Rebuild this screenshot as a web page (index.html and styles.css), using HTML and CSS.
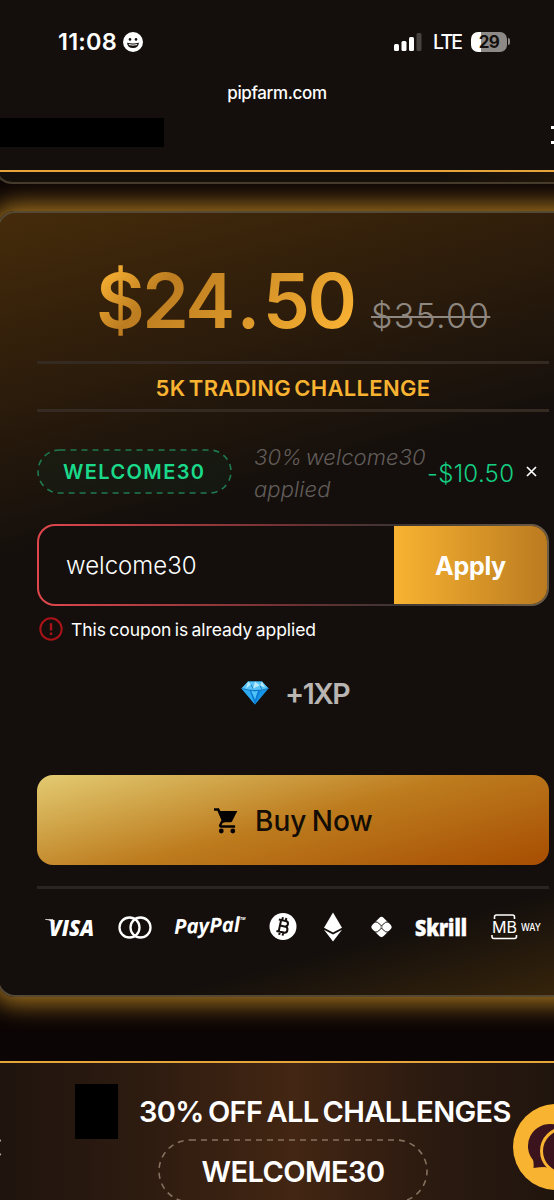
FILE: index.html
```html
<!DOCTYPE html>
<html lang="en">
<head>
<meta charset="utf-8">
<meta name="viewport" content="width=device-width, initial-scale=1">
<title>PipFarm – Checkout</title>
<link rel="stylesheet" href="styles.css">
</head>
<body>
<div class="screen">
  <header class="top">
    <div class="status">
      <span class="clock">11:08</span>
      <svg class="smiley" width="20" height="20" viewBox="0 0 20 20"><circle cx="10" cy="10" r="10" fill="#fff"/><circle cx="7" cy="7.400" r="1.300" fill="#140f0c"/><circle cx="13" cy="7.400" r="1.300" fill="#140f0c"/><path d="M4 10.800q6 1.600 12 0q-.6 5.200-6 5.200t-6-5.200z" fill="#140f0c"/><path d="M5.800 12.600q4.200 1 8.400 0" stroke="#fff" stroke-width="1" fill="none"/></svg>
      <svg class="signal" width="28" height="20" viewBox="0 0 28 20"><rect x="0" y="12" width="5" height="7" rx="1.500" fill="#fff"/><rect x="7.500" y="9" width="5" height="10" rx="1.500" fill="#fff"/><rect x="15" y="5" width="5" height="14" rx="1.500" fill="#fff"/><rect x="22.500" y="1" width="5" height="18" rx="1.500" fill="#464240"/></svg>
      <span class="net">LTE</span>
      <span class="battery">29</span><span class="nub"></span>
    </div>
    <div class="url">pipfarm.com</div>
    <div class="navbar"><div class="logo"></div><div class="burger"></div></div>
  </header>

  <main class="page">
    <div class="prev-card"></div>
    <section class="card">
      <div class="prices"><span class="price">$24<span class="point">.</span>50</span><span class="old">$35.00</span></div>
      <div class="plan">5K TRADING CHALLENGE</div>
      <div class="coupon">
        <span class="chip"><svg width="195" height="45"><rect x="1" y="1" width="193" height="43" rx="21.500"/></svg><b>WELCOME30</b></span>
        <span class="desc">30% welcome30<br>applied</span>
        <span class="minus">-$10.50</span>
        <svg class="close" width="11" height="11" viewBox="0 0 11 11"><path d="M1 1l9 9M10 1l-9 9" stroke="#fff" stroke-width="1.700"/></svg>
      </div>
      <div class="field"><div class="field-in"><span class="value">welcome30</span><span class="apply">Apply</span></div></div>
      <div class="error">
        <svg width="24" height="24" viewBox="0 0 24 24" fill="none" stroke="#a81318"><circle cx="12" cy="12" r="10.700" stroke-width="2"/><path d="M12 6.300v7.200M12 15.600v2.400" stroke-width="2.400"/></svg>
        <span>This coupon is already applied</span>
      </div>
      <div class="xp">
        <svg width="28" height="24" viewBox="0 0 28 24"><path d="M7 .5h14l6.500 7L14 23.500.5 7.500z" fill="#1695e6"/><path d="M7 .5h14l6.500 7q-13.500 4-27 0z" fill="#55c3f5"/><path d="M7 .5l3 3-5 4zM14 .5l5 4-7 3zM21 .5l3 6-5-2z" fill="#b6e9fc"/><path d="M.5 7.500l8 1.500L14 23.500z" fill="#2eaaf0"/><path d="M8.500 9h11L14 23.500z" fill="#0c7bd5"/><path d="M10 9.500l4 1 3-1-3 9z" fill="#4fc2f7"/><path d="M.5 7.500q13.500 4 27 0M10 3.500l2 4M19 4.500l2 4" stroke="#116fc0" stroke-width=".8" fill="none"/></svg>
        <span>+1XP</span>
      </div>
      <div class="buy">
        <svg width="25" height="26" viewBox="0 0 25 26"><path d="M1 1.500h4.200L11 14.600" fill="none" stroke="#050302" stroke-width="2.500"/><path d="M5 3h19.300l-5.200 10.300q-.5.900-1.500.9H9.500z" fill="#050302"/><path d="M9.300 13l-2.200 4.400q-.3 1.100 1 1.100h14" fill="none" stroke="#050302" stroke-width="2.300"/><circle cx="8.300" cy="23" r="2.400" fill="#050302"/><circle cx="19.800" cy="23" r="2.400" fill="#050302"/></svg>
        <span>Buy Now</span>
      </div>
      <div class="pay">
        <svg width="52" height="30"><text class="visa" x="5" y="23.500" font-size="22" textLength="45" lengthAdjust="spacingAndGlyphs">VISA</text><path d="M1 7.200h8l2 6Q9 8.500 1 7.800z" fill="#fff"/></svg>
        <svg width="34" height="30" fill="none" stroke="#fff" stroke-width="2.300"><circle cx="11.500" cy="15.500" r="10"/><circle cx="22.500" cy="15.500" r="10"/></svg>
        <svg width="74" height="30"><text x="1" y="21" font-size="20.500" textLength="66" lengthAdjust="spacingAndGlyphs" transform="rotate(-2 30 15)">PayPal</text><text x="67" y="8" font-size="4" font-weight="400">TM</text></svg>
        <svg width="28" height="30" viewBox="0 0 28 30"><circle cx="14" cy="14.500" r="13.500" fill="#fff"/><g transform="rotate(12 14 14.500)" fill="none" stroke="#140f0c" stroke-width="2"><path d="M8.500 8.500h7a2.800 2.800 0 0 1 0 5.700h-4.500M10.800 8.500v12M8.500 20.300h7.500a3 3 0 0 0 0-6.100h-5M12 5.500v3M15.500 5.500v3M12 20.500v3M15.500 20.500v3"/></g></svg>
        <svg width="30" height="30" viewBox="0 0 30 30" fill="#fff"><path d="M15 .5l9 15.300-9 4.700-9-4.700z"/><path d="M6 17.800l9 4.700 9-4.700-9 11.700z"/></svg>
        <svg width="23" height="30" viewBox="0 0 23 30"><rect x="3.500" y="7" width="16" height="16" rx="3.200" transform="rotate(45 11.500 15)" fill="#fff"/><path d="M3 10h3q1.500 0 2.500 1l3 3 3-3q1-1 2.500-1h3M3 20h3q1.500 0 2.500-1l3-3 3 3q1 1 2.500 1h3M11 14.500l1 1M12 14.500l-1 1" fill="none" stroke="#140f0c" stroke-width="1"/></svg>
        <svg width="55" height="30"><text class="skrill" x="1" y="23.500" font-size="22" textLength="52" lengthAdjust="spacingAndGlyphs">Skrill</text></svg>
        <svg width="53" height="30" fill="none" stroke="#fff" stroke-width="1.600"><path d="M3.500 7V5q0-2 2-2h16q2 0 2 2v2M1 23v1.500q0 2 2 2h20.500q2 0 2-2V23"/><text class="mb" x="1" y="20.500" font-size="16.500" textLength="25" lengthAdjust="spacingAndGlyphs">MB</text><text class="way" x="30" y="18.500" font-size="11" textLength="20" lengthAdjust="spacingAndGlyphs">WAY</text></svg>
      </div>
    </section>
  </main>

  <footer class="banner">
    <div class="headline"><span class="pic"></span><span>30% OFF ALL CHALLENGES</span></div>
    <div class="code"><svg width="270" height="64"><rect x="1" y="1" width="268" height="62" rx="31"/></svg><b>WELCOME30</b></div>
    <svg class="dots" width="4" height="24" fill="none" stroke="#bbb" stroke-width="1.500"><path d="M-3 5q3-1 3.500 1.500M-3 20q3 1 3.500-1.500"/></svg>
    <svg class="chat" width="86" height="86" viewBox="0 0 86 86"><circle cx="43" cy="43" r="43" fill="#f8b331"/><path d="M37 20a22 22 0 0 0-17 36q1 3 .5 8 6-1 11-1a22 22 0 1 0 5.500-43z" fill="#3b131d"/><circle cx="51" cy="47" r="22.500" fill="#3b131d" stroke="#f8b331" stroke-width="3"/></svg>
  </footer>
</div>
</body>
</html>
```
FILE: styles.css
```css
* { box-sizing: border-box; }
body { margin: 0; background: #0c0505; color: #fff; font-family: Inter, "Liberation Sans", sans-serif; }
svg { display: block; flex: none; overflow: visible; }
.screen { width: 554px; height: 1200px; overflow: hidden; display: flex; flex-direction: column; position: relative; }
span, b { white-space: nowrap; }

.top { height: 172px; flex: none; background: #140f0c; border-bottom: 2px solid #e5a53a; position: relative; z-index: 2; }
.status { display: flex; align-items: center; height: 70px; padding: 13px 0 0 58px; }
.clock { font-size: 23.500px; font-weight: 600; width: 65px; letter-spacing: .2px; }
.signal { margin-left: 251px; }
.net { font-size: 19.500px; font-weight: 500; letter-spacing: -1.800px; margin-left: 11px; width: 38px; }
.battery { width: 36px; height: 20px; border-radius: 7px; background: linear-gradient(90deg, #fff 29%, #8c8987 29%); color: #140f0c; font-size: 17px; line-height: 20px; font-weight: 700; text-align: center; letter-spacing: -.5px; }
.nub { width: 2px; height: 7px; margin-left: 1px; border-radius: 0 2px 2px 0; background: #8c8987; }
.url { height: 46px; line-height: 47px; text-align: center; font-size: 17px; font-weight: 500; letter-spacing: -.35px; }
.navbar { display: flex; justify-content: space-between; padding-top: 2px; }
.logo { width: 164px; height: 29px; background: #000; }
.burger { width: 3px; height: 18px; margin-top: 8px; border: solid #fff; border-width: 3px 0; }

.page { height: 889px; flex: none; background: #0c0505; }
.prev-card { height: 12px; width: 592px; margin-left: -3px; background: linear-gradient(90deg, #140f0c 75%, #24170a); border: solid #433a2c; border-width: 0 2px 2px; border-radius: 0 0 18px 18px / 0 0 14px 14px; }
.card { width: 592px; height: 786px; margin: 27px 0 0 -3px; padding: 46px 38px 0; border: 2px solid #564934; border-radius: 18px;
  background: linear-gradient(165deg, #452b0a 0, #2e1d0b 18%, #140f0c 37%, #140f0c 88%, #38250b 100%);
  box-shadow: 0 0 25px 7px rgba(170, 120, 32, .95); }
.prices { display: flex; height: 102px; padding-left: 59px; }
.price { font-size: 75px; line-height: 84px; font-weight: 600; letter-spacing: -2.600px; width: 275px; background: linear-gradient(135deg, #f9b233 5%, #bc7c20 25%, #f9b233 85%); -webkit-background-clip: text; background-clip: text; color: transparent; }
.point { padding: 0 5px 0 4px; }
.old { font-size: 34px; line-height: 114px; font-weight: 300; letter-spacing: 1.200px; color: #8e8780; text-decoration: line-through; text-decoration-thickness: 2px; }
.plan { height: 51px; border: solid #352a21; border-width: 3px 0; line-height: 48px; text-align: center; font-size: 22px; font-weight: 600; word-spacing: -2.500px; letter-spacing: .3px; color: #f8b331; width: 512px; }
.coupon { display: flex; height: 76px; margin-top: 29px; padding-top: 8px; }
.chip { width: 195px; height: 45px; display: grid; }
.chip svg, .chip b { grid-area: 1 / 1; }
.chip rect { fill: #13201580; stroke: #1f7a50; stroke-width: 1.600; stroke-dasharray: 6 5; }
.chip b { align-self: center; padding-left: 26px; color: #1ad98a; font-size: 20px; font-weight: 600; letter-spacing: 1.400px; }
.desc { margin: -7px 0 0 22px; width: 173px; font-size: 22px; line-height: 31.500px; font-style: italic; font-weight: 300; letter-spacing: .1px; word-spacing: -2.500px; color: #625d5a; }
.minus { width: 105px; line-height: 49px; font-size: 24px; font-weight: 300; letter-spacing: .3px; color: #14cf83; }
.close { margin-top: 17px; margin-left: -6px; }
.field { width: 512px; height: 82px; margin-top: 7px; padding: 2px; border-radius: 18px; background: linear-gradient(90deg, #e0474d 0, #6e3033 50%, #3c3532 70%, #6d5d48 100%); }
.field-in { height: 78px; border-radius: 16px; overflow: hidden; display: flex; line-height: 80px; background: #140f0c; }
.value { width: 355px; padding-left: 27px; font-size: 24px; font-weight: 300; }
.apply { flex: 1; text-align: center; font-size: 25px; font-weight: 700; letter-spacing: -.3px; background: linear-gradient(90deg, #f8b331, #bb7b20); }
.error { display: flex; align-items: center; height: 28px; margin-top: 9px; padding-left: 2px; gap: 8px; font-size: 17.500px; letter-spacing: -.05px; word-spacing: -1.500px; }
.xp { display: flex; align-items: center; height: 40px; margin-top: 30px; padding-left: 204px; gap: 16px; font-size: 28.500px; font-weight: 600; letter-spacing: -1.500px; color: #b9b5b3; }
.buy { width: 512px; height: 90px; margin-top: 62px; border-radius: 16px; display: flex; align-items: center; gap: 17px; padding: 2px 0 0 176px; color: #140d05; font-size: 28px; font-weight: 500; word-spacing: -2px; background: linear-gradient(165deg, #e3cb72 0, #bd7c1e 50%, #a74d02 100%); }
.pay { width: 512px; height: 60px; margin-top: 21px; padding: 23px 5px 0 7px; border-top: 3px solid #2a2522; display: flex; justify-content: space-between; }
.pay text { fill: #fff; stroke: none; font-family: "Open Sans", sans-serif; font-weight: 700; font-style: italic; }
.pay .visa { font-weight: 800; }
.pay .skrill { font-style: normal; font-weight: 800; stroke: #fff; stroke-width: .5px; }
.pay .mb { font-style: normal; font-weight: 400; font-family: Inter, sans-serif; }
.pay .way { font-style: normal; font-weight: 500; font-family: Inter, sans-serif; }

.banner { height: 139px; flex: none; position: relative; border-top: 2px solid #e5a53a; padding: 20px 0 0 75px;
  background: linear-gradient(90deg, #1f140e 0, #2d1b10 25%, #432613 53%, #2b1a10 78%, #20150e 100%); }
.headline { display: flex; align-items: center; gap: 21px; height: 56px; font-size: 29px; font-weight: 600; letter-spacing: -.65px; word-spacing: -2.500px; }
.pic { width: 43px; height: 55px; background: #000; }
.code { width: 270px; height: 64px; margin-left: 83px; display: grid; font-size: 29px; letter-spacing: -.6px; }
.code svg, .code b { grid-area: 1 / 1; }
.code b { align-self: center; text-align: center; font-weight: 600; }
.code rect { fill: none; stroke: #86715f; stroke-width: 1.600; stroke-dasharray: 6 5; }
.dots { position: absolute; left: 0; top: 72px; }
.chat { position: absolute; left: 513px; top: 41px; }
```
